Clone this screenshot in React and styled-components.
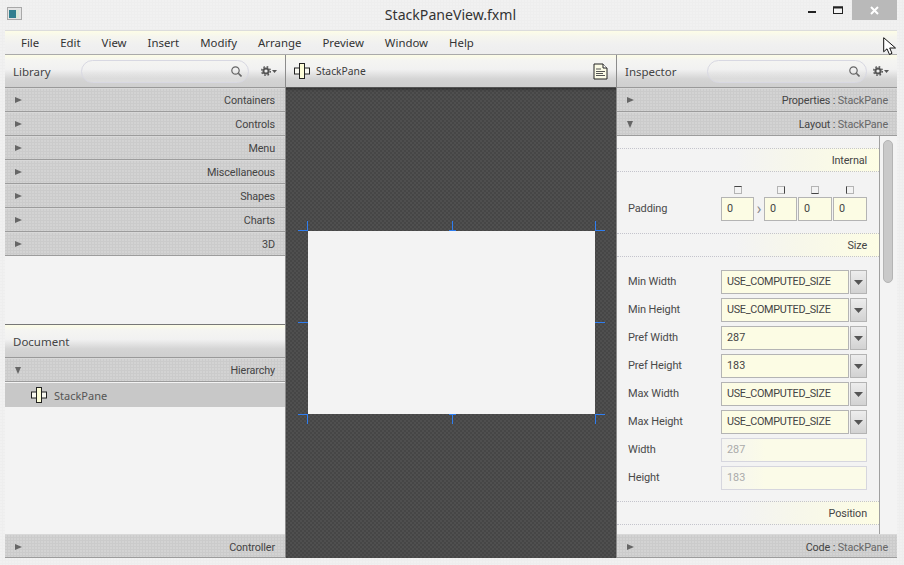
import React from "react";
import styled, { createGlobalStyle } from "styled-components";

const Global = createGlobalStyle`
  html, body { margin: 0; padding: 0; background: #eeeeee; }
  * { box-sizing: border-box; }
`;

const dots = `radial-gradient(circle at 1px 1px, rgba(255,255,255,.16) 1px, transparent 1.2px)`;

const Window = styled.div`
  position: relative; width: 904px; height: 565px; overflow: hidden;
  display: flex; flex-direction: column;
  background: #eeeeee; background-image: ${dots}; background-size: 3px 3px;
  font-family: Roboto, "Noto Sans", sans-serif; font-size: 10.8px; letter-spacing: -.12px; color: #3c3c3c;
`;
const TitleBar = styled.div`
  height: 30px; flex: none; display: grid; grid-template-columns: 1fr auto 1fr;
  padding: 0 7px 0 7px;
`;
const AppIcon = styled.div`display: flex; padding-top: 7px;`;
const Title = styled.div`
  font-family: "Noto Sans", sans-serif; font-size: 14.1px; letter-spacing: 0; line-height: 30px; color: #333; margin-left: -3px;
`;
const WinButtons = styled.div`display: flex; justify-content: flex-end; align-items: flex-start;`;
const WinButton = styled.div`
  width: ${p => p.$w}px; height: 20px; display: flex; align-items: center; justify-content: center;
  background: ${p => p.$close ? "#b9b9b9" : "transparent"};
`;
const Main = styled.div`
  flex: 1; min-height: 0; display: flex; flex-direction: column;
  margin: 0 7px 7px 5px;
`;
const MenuBar = styled.div`
  height: 25px; flex: none; display: flex; gap: 21px; align-items: center; padding: 0 0 1px 16px;
  background: linear-gradient(#fdfde6 0, #f6f6ee 5px, #f0f0f0 60%, #eeeeee);
  border-top: 1px solid #dcdcdc; border-bottom: 1px solid #aaaaaa; color: #333;
  font-family: "Noto Sans", sans-serif; font-size: 11.4px; letter-spacing: 0;
`;
const Panels = styled.div`
  flex: 1; min-height: 0; display: grid; grid-template-columns: 281px 331px 1fr;
`;
const Column = styled.div`
  display: flex; flex-direction: column; min-height: 0; background: #f3f3f3; overflow: hidden;
  border-right: ${p => p.$edge ? "1px solid #8c8c8c" : "none"};
`;
const Header = styled.div`
  height: ${p => p.$h || 33}px; flex: none; display: flex; align-items: center;
  padding: 0 8px;
  background: linear-gradient(#fdfde6 0, #f5f5f2 5px, #f1f1f1 45%, #d4d4d4 75%, #cfcfcf 100%);
  border-bottom: 1px solid #999999;
`;
const HeaderTitle = styled.div`
  font-family: "Noto Sans", sans-serif; font-size: 11.5px; letter-spacing: 0; color: #444; width: ${p => p.$w}px; flex: none;
`;
const Search = styled.div`
  height: 23px; border-radius: 12px; border: 1px solid #d8d8e2; width: ${p => p.$w}px;
  display: flex; align-items: center; justify-content: flex-end; padding-right: 6px;
  background: linear-gradient(transparent 55%, rgba(255,255,255,.25));
`;
const Gear = styled.div`margin-left: ${p => p.$ml}px; display: flex; align-items: center;`;
const Row = styled.div`
  height: 24px; flex: none; display: flex; align-items: center; justify-content: space-between;
  padding: ${p => p.$low ? "2px" : 0} 10px 0 10px; color: #444;
  background: #cbcbcb; background-image: ${dots}; background-size: 3px 3px;
  border-top: 1px solid #d8d8d8; border-bottom: 1px solid #9c9c9c;
`;
const InspectorRow = styled(Row)`padding-right: 9px;`;
const Sub = styled.span`color: #666;`;
const Tri = styled.div`
  width: 0; height: 0; flex: none;
  ${p => p.$open
    ? "border-left: 3.5px solid transparent; border-right: 3.5px solid transparent; border-top: 7px solid #666;"
    : "border-top: 3.5px solid transparent; border-bottom: 3.5px solid transparent; border-left: 7px solid #666;"}
`;
const Gap = styled.div`flex: ${p => p.$h ? "none" : 1}; height: ${p => p.$h ? p.$h + "px" : "auto"}; min-height: 0;`;
const TopDivider = styled.div`border-top: 1px solid #777; flex: none;`;
const TreeItem = styled.div`
  height: 24px; flex: none; margin-top: 1px; display: flex; align-items: center; gap: 7px;
  padding-left: 26px; background: #c8c8c8; color: #555; font-family: "Noto Sans", sans-serif; font-size: 11px; letter-spacing: 0;
`;
const Canvas = styled.div`
  flex: 1; min-height: 0; display: flex; align-items: center; justify-content: center;
  background-color: #4a4a4a;
  background-image: repeating-conic-gradient(#4f4f4f 0 25%, #464646 0 50%);
  background-size: 4px 4px;
  box-shadow: inset 0 3px 3px -2px #2e2e2e;
`;
const CanvasHeader = styled(Header)`
  justify-content: space-between; padding: 0 8px 0 8px; border-bottom: 1px solid #555;
`;
const HeaderGroup = styled.div`display: flex; align-items: center; gap: 6px; font-family: "Noto Sans", sans-serif; font-size: 10.3px; letter-spacing: 0;`;
const Pane = styled.div`
  position: relative; width: 287px; height: 183px; background: #f3f3f3; flex: none; margin-top: -1px;
`;
const Handle = styled.div`
  position: absolute; background: #2e7df0;
  top: ${p => p.$t}px; left: ${p => p.$l}px; width: ${p => p.$w}px; height: ${p => p.$h}px;
`;
const InspectorBody = styled.div`
  flex: 1; min-height: 0; display: grid; grid-template-columns: 263px 1fr; overflow: hidden;
`;
const Form = styled.div`
  padding-top: 12px; border-right: 1px solid #a0a0a0; display: flex; flex-direction: column;
`;
const Section = styled.div`
  height: 24px; flex: none; display: flex; align-items: center; justify-content: flex-end;
  padding: 0 12px 0 0; color: #444;
  border-top: 1px dotted #c4c4cc; border-bottom: 1px dotted #c4c4cc;
  background: linear-gradient(90deg, #f3f3f3 45%, #f7f7ea 70%, #fdfde4 100%);
`;
const PaddingRow = styled.div`
  display: flex; align-items: flex-end; padding: 13px 0 12px 11px; height: 61px; flex: none;
`;
const Label = styled.div`
  width: 93px; flex: none; color: #4a4a4a; font-size: 11px; margin-top: -1px;
`;
const PaddingLabel = styled(Label)`line-height: 24px; margin-top: 0; padding-top: 1px;`;
const Cell = styled.div`
  width: ${p => p.$w}px; margin-left: ${p => p.$ml || 0}px; flex: none;
  display: flex; flex-direction: column; align-items: center; gap: 3px;
`;
const Mark = styled.div`
  width: 8px; height: 8px; border: 1px solid #b4b4b4;
  ${p => p.$side && `border-${p.$side}: 1px solid #444;`}
`;
const Field = styled.div`
  height: 24px; flex: ${p => p.$fill ? 1 : "none"};
  display: flex; align-items: center; padding: 0 0 1px 5px;
  background: ${p => p.$off ? "linear-gradient(90deg,#f5f5f1,#fbfbe8 30%,#fbfbe8)" : "#fcfce4"};
  border: 1px solid ${p => p.$off ? "#d6d6de" : "#b4b4b4"};
  color: ${p => p.$off ? "#aaaaaa" : "#444"};
  letter-spacing: ${p => p.$caps ? "-.3px" : "0"};
`;
const FullField = styled(Field)`width: 100%;`;
const FormRows = styled.div`display: flex; flex-direction: column; gap: 4px; padding: 13px 12px 11px 11px;`;
const FormRow = styled.div`display: flex; align-items: center; height: 24px;`;
const FieldGroup = styled.div`width: 146px; display: flex; gap: 1px;`;
const Drop = styled.div`
  width: 17px; flex: none; height: 24px; display: flex; align-items: center; justify-content: center;
  background: linear-gradient(#ededed, #d2d2d2); border: 1px solid #b4b4b4;
`;
const Chevron = styled.div`
  width: 10px; height: 24px; flex: none; display: flex; align-items: center; justify-content: center;
  color: #888; font-size: 17px; padding-bottom: 3px;
`;
const Track = styled.div`padding: 4px 3px 0 3px;`;
const Thumb = styled.div`
  width: 10px; height: 143px; border-radius: 5px; background: #c9c9c9; border: 1px solid #b4b4b4;
`;
const Pointer = styled.div`position: absolute; left: 883px; top: 37px; line-height: 0;`;

const StackIcon = () => (
  <svg width="16" height="16" viewBox="0 0 16 16">
    <rect x=".5" y="5" width="15" height="6" fill="#f8f8f0" stroke="#222" />
    <rect x="5.5" y=".5" width="5" height="15" fill="#fdfdd8" stroke="#222" />
  </svg>
);
const DocIcon = () => (
  <svg width="15" height="17" viewBox="0 0 15 17">
    <path d="M1 1h9l4 4v11H1z" fill="#fbfbe6" stroke="#222" />
    <path d="M10 1v4h4" fill="#fff" stroke="#222" />
    <path d="M3 6h5M3 8.500h9M3 10.500h7M3 12.500h9" stroke="#555" />
  </svg>
);
const SearchIcon = () => (
  <svg width="11" height="11" viewBox="0 0 11 11" fill="none" stroke="#666" strokeWidth="1.200">
    <circle cx="4.500" cy="4.500" r="3.700" /><path d="M7.300 7.300L10.500 10.500" strokeWidth="1.600" />
  </svg>
);
const GearIcon = () => (
  <svg width="16" height="10" viewBox="0 0 16 10">
    <circle cx="5" cy="5" r="2.600" fill="none" stroke="#555" strokeWidth="2" />
    <circle cx="5" cy="5" r="4.300" fill="none" stroke="#555" strokeWidth="1.400" strokeDasharray="1.700 1.700" />
    <path d="M11 4h5l-2.500 3z" fill="#555" />
  </svg>
);
const AppGlyph = () => (
  <svg width="15" height="13" viewBox="0 0 15 13">
    <rect x=".5" y=".5" width="14" height="12" fill="#e4e4e4" stroke="#a8a8a8" />
    <rect x="2" y="3" width="7" height="8" fill="#2f7f8f" />
    <rect x="9" y="3" width="3" height="8" fill="#d8e8d8" />
  </svg>
);

const libraryRows = ["Containers", "Controls", "Menu", "Miscellaneous", "Shapes", "Charts", "3D"];
const menus = ["File", "Edit", "View", "Insert", "Modify", "Arrange", "Preview", "Window", "Help"];
const sizeRows = [
  ["Min Width", "USE_COMPUTED_SIZE"], ["Min Height", "USE_COMPUTED_SIZE"],
  ["Pref Width", "287"], ["Pref Height", "183"],
  ["Max Width", "USE_COMPUTED_SIZE"], ["Max Height", "USE_COMPUTED_SIZE"],
];
const handles = [
  [-1, -10, 10, 1], [-10, -1, 1, 10],
  [-1, 287, 10, 1], [-10, 287, 1, 10],
  [-10, 144, 1, 10], [-1, 141, 7, 1],
  [91, -10, 10, 1], [91, 287, 10, 1],
  [183, -10, 10, 1], [183, -1, 1, 10],
  [183, 287, 10, 1], [183, 287, 1, 10],
  [183, 144, 1, 10], [183, 141, 7, 1],
];

export default function App() {
  return (
    <Window>
      <Global />
      <TitleBar>
        <AppIcon><AppGlyph /></AppIcon>
        <Title>StackPaneView.fxml</Title>
        <WinButtons>
          <WinButton $w={26}>
            <svg width="9" height="10" viewBox="0 0 9 10"><rect y="6" width="8" height="2" fill="#222" /></svg>
          </WinButton>
          <WinButton $w={27}>
            <svg width="11" height="9" viewBox="0 0 11 9"><rect x=".5" y="1" width="9" height="6.500" fill="#f4f4f4" stroke="#222" /><rect x="0" y=".5" width="10" height="2" fill="#222" /></svg>
          </WinButton>
          <WinButton $w={45} $close>
            <svg width="9" height="9" viewBox="0 0 9 9"><path d="M1 1l7 7M8 1l-7 7" stroke="#fff" strokeWidth="2" /></svg>
          </WinButton>
        </WinButtons>
      </TitleBar>
      <Main>
        <MenuBar>{menus.map(m => <span key={m}>{m}</span>)}</MenuBar>
        <Panels>
          <Column $edge>
            <Header>
              <HeaderTitle $w={68}>Library</HeaderTitle>
              <Search $w={169}><SearchIcon /></Search>
              <Gear $ml={12}><GearIcon /></Gear>
            </Header>
            {libraryRows.map(r => <Row key={r}><Tri /><span>{r}</span></Row>)}
            <Gap $h={68} />
            <TopDivider />
            <Header><HeaderTitle>Document</HeaderTitle></Header>
            <Row><Tri $open /><span>Hierarchy</span></Row>
            <TreeItem><StackIcon /><span>StackPane</span></TreeItem>
            <Gap />
            <Row $low><Tri /><span>Controller</span></Row>
          </Column>
          <Column $edge>
            <CanvasHeader>
              <HeaderGroup><StackIcon /><span>StackPane</span></HeaderGroup>
              <DocIcon />
            </CanvasHeader>
            <Canvas>
              <Pane>
                {handles.map(([t, l, w, h], i) => <Handle key={i} $t={t} $l={l} $w={w} $h={h} />)}
              </Pane>
            </Canvas>
          </Column>
          <Column>
            <Header>
              <HeaderTitle $w={82}>Inspector</HeaderTitle>
              <Search $w={161}><SearchIcon /></Search>
              <Gear $ml={6}><GearIcon /></Gear>
            </Header>
            <InspectorRow><Tri /><span>Properties : <Sub>StackPane</Sub></span></InspectorRow>
            <InspectorRow><Tri $open /><span>Layout : <Sub>StackPane</Sub></span></InspectorRow>
            <InspectorBody>
              <Form>
                <Section>Internal</Section>
                <PaddingRow>
                  <PaddingLabel>Padding</PaddingLabel>
                  <Cell $w={33}><Mark $side="top" /><FullField>0</FullField></Cell>
                  <Chevron>›</Chevron>
                  <Cell $w={33}><Mark $side="right" /><FullField>0</FullField></Cell>
                  <Cell $w={34} $ml={1}><Mark $side="bottom" /><FullField>0</FullField></Cell>
                  <Cell $w={34} $ml={1}><Mark $side="left" /><FullField>0</FullField></Cell>
                </PaddingRow>
                <Section>Size</Section>
                <FormRows>
                  {sizeRows.map(([l, v]) => (
                    <FormRow key={l}>
                      <Label>{l}</Label>
                      <FieldGroup>
                        <Field $fill $caps={v.length > 3}>{v}</Field>
                        <Drop><svg width="9" height="5" viewBox="0 0 9 5"><path d="M0 0h9L4.500 5z" fill="#555" /></svg></Drop>
                      </FieldGroup>
                    </FormRow>
                  ))}
                  <FormRow><Label>Width</Label><FieldGroup><Field $fill $off>287</Field></FieldGroup></FormRow>
                  <FormRow><Label>Height</Label><FieldGroup><Field $fill $off>183</Field></FieldGroup></FormRow>
                </FormRows>
                <Section>Position</Section>
              </Form>
              <Track><Thumb /></Track>
            </InspectorBody>
            <InspectorRow $low><Tri /><span>Code : <Sub>StackPane</Sub></span></InspectorRow>
          </Column>
        </Panels>
      </Main>
      <Pointer>
        <svg width="14" height="19" viewBox="0 0 14 19">
          <path d="M.7.700L.7 14.800 4 11.800 6.500 17.500 9 16.300 6.700 11H12.500Z" fill="#fff" stroke="#111" strokeWidth="1" />
        </svg>
      </Pointer>
    </Window>
  );
}
